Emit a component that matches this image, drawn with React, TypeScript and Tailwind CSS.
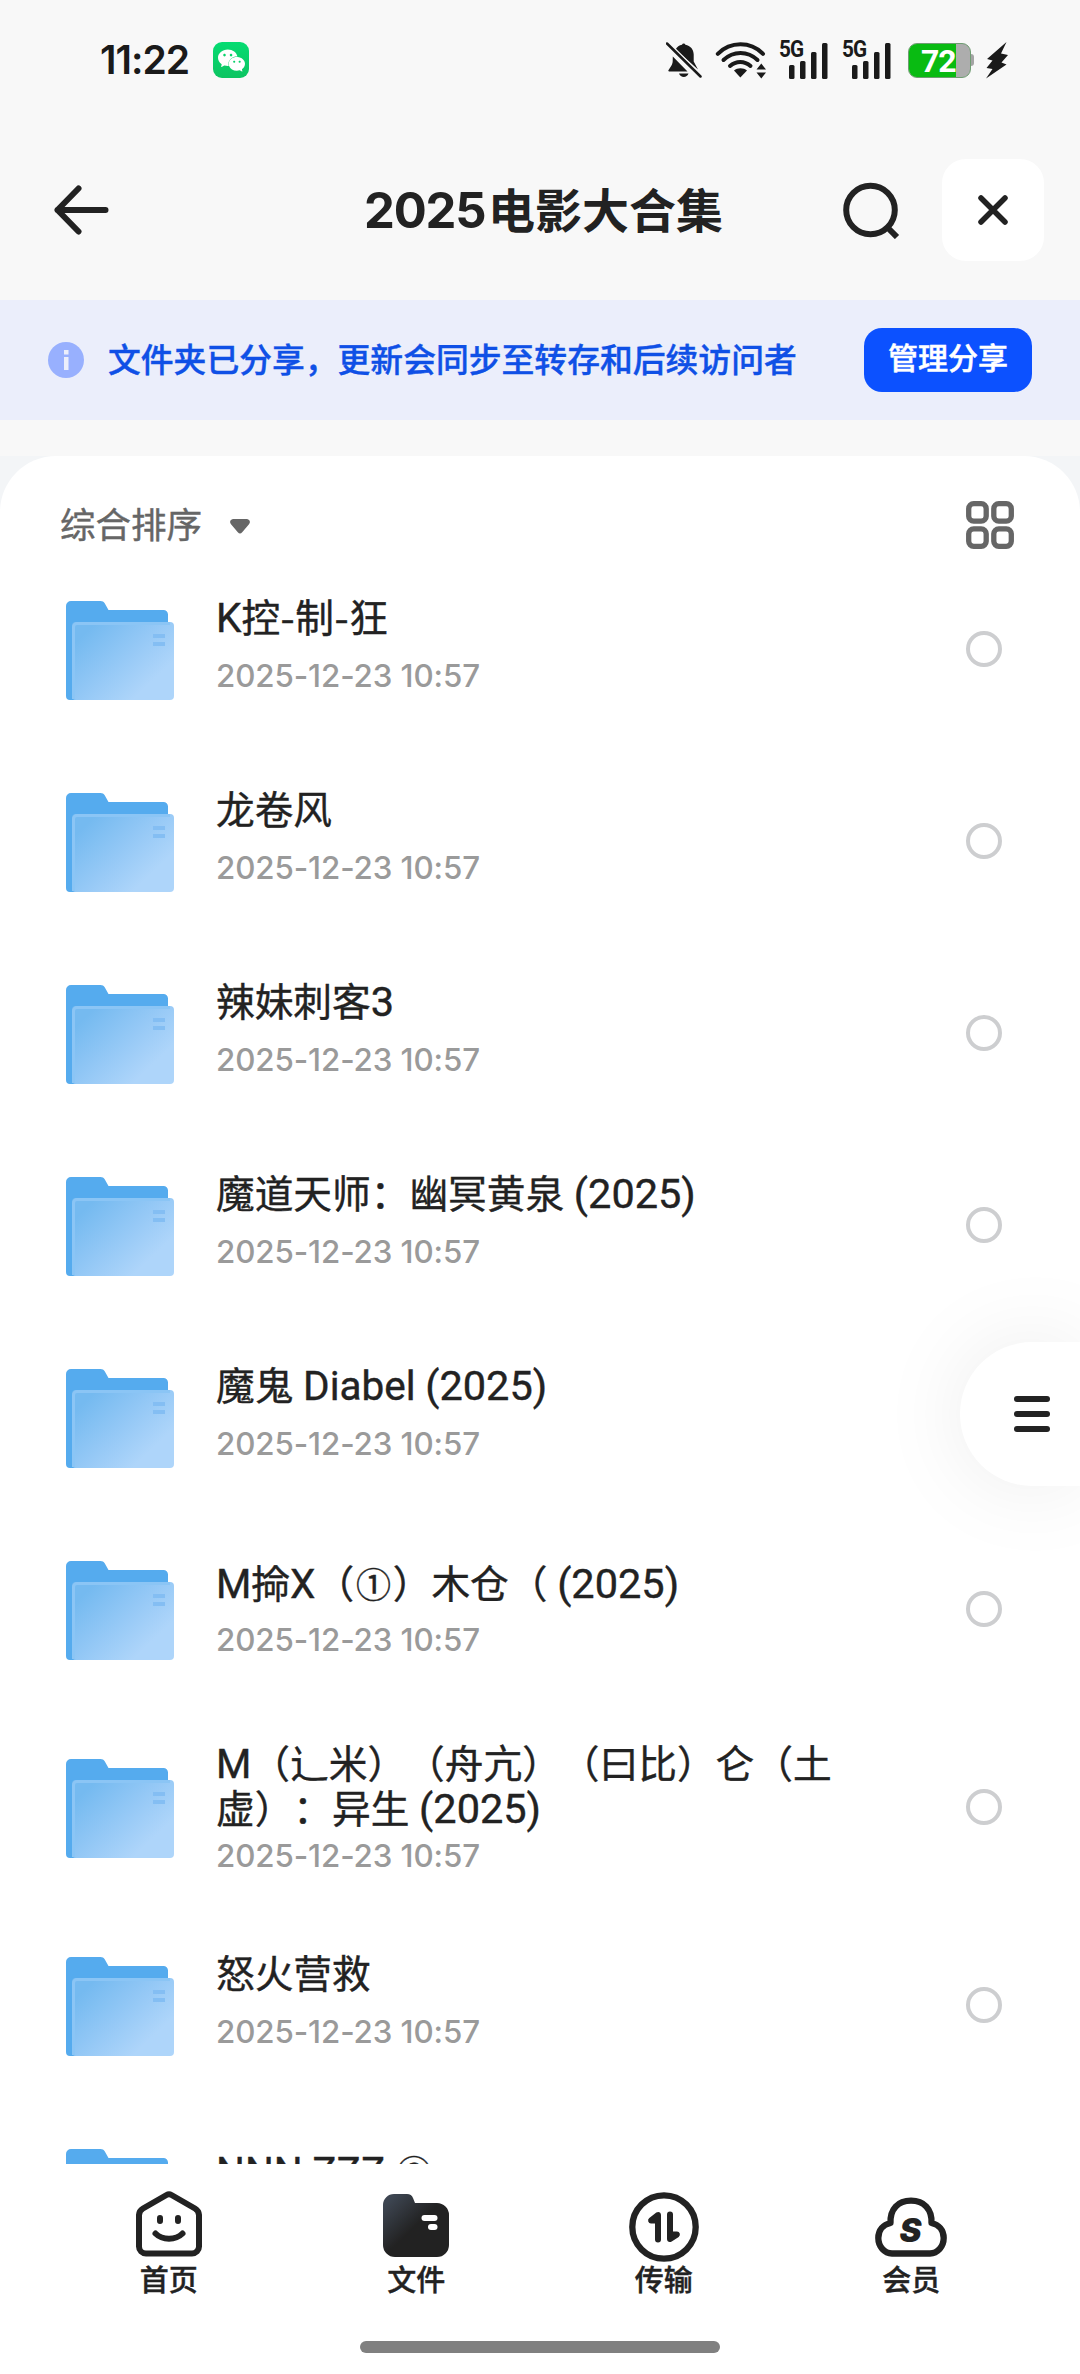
import React from "react";
import { SiWechat } from "react-icons/si";

type Folder = {
  id: number;
  lines: string[];
  date: string;
  rowClass: string;
  titleClass: string;
  dateClass: string;
};

const ROW = {
  rowClass: "h-[192px]",
  titleClass: "pt-[38px]",
  dateClass: "mt-[16px]",
};

// circled digits and two-line names make the row a bit taller
const ROW_TALL = {
  rowClass: "h-[198px]",
  titleClass: "pt-[44px]",
  dateClass: "mt-[14px]",
};

const ROW_DOUBLE = {
  rowClass: "h-[198px]",
  titleClass: "pt-[26px]",
  dateClass: "mt-[5px]",
};

const DATE = "2025-12-23 10:57";

const folders: Folder[] = [
  { id: 1, lines: ["K控-制-狂"], date: DATE, ...ROW },
  { id: 2, lines: ["龙卷风"], date: DATE, ...ROW },
  { id: 3, lines: ["辣妹刺客3"], date: DATE, ...ROW },
  { id: 4, lines: ["魔道天师：幽冥黄泉 (2025)"], date: DATE, ...ROW },
  { id: 5, lines: ["魔鬼 Diabel (2025)"], date: DATE, ...ROW },
  { id: 6, lines: ["M掵X（①）木仓（ (2025)"], date: DATE, ...ROW_TALL },
  {
    id: 7,
    lines: ["M（辶米）（舟亢）（曰比）仑（土", "虚）：异生 (2025)"],
    date: DATE,
    ...ROW_DOUBLE,
  },
  { id: 8, lines: ["怒火营救"], date: DATE, ...ROW },
  { id: 9, lines: ["NNN ZZZ ②"], date: DATE, ...ROW_TALL },
];

function BellOffIcon() {
  return (
    <svg width="36" height="36" viewBox="0 0 36 36" fill="#1a1a1a">
      <path d="M9.500 7.500C11 4.800 13.300 3.300 16 2.800a1.800 1.800 0 0 1 3.400 0c5 .9 8.300 4.800 8.300 9.700v7L32 27.500Z" />
      <path d="M6.800 14.500 21.500 29.500H3.200c-.8 0-1.200-.9-.6-1.500l2.700-4.200c.9-1.400 1.300-3 1.400-4.600z" />
      <path d="M13 31.500h9.500c-.8 2.300-2.600 3.500-4.700 3.500s-4-1.200-4.800-3.500z" />
      <path d="M1.200 1.500 34.500 34.500" stroke="#f8f8f8" strokeWidth="5" />
      <path d="M1 1.500 34.500 34.500" stroke="#1a1a1a" strokeWidth="2.500" strokeLinecap="round" />
    </svg>
  );
}

function WifiIcon() {
  return (
    <svg width="52" height="38" viewBox="0 0 52 38" fill="none">
      <g stroke="#1a1a1a" strokeWidth="4" strokeLinecap="round">
        <path d="M2.800 12.800C15.500.1 35.500.1 48 12.800" />
        <path d="M8.500 19c9.800-9.400 24.200-9.400 34 0" />
        <path d="M15 25c6-5.400 14.500-5.400 20.500 0" />
      </g>
      <path d="M19 29.500c3.500-3 9.500-3 13 0L25.300 36.500z" fill="#1a1a1a" />
      <path d="M41.500 28.500 46.300 22.500 51 28.500zM41.500 31.500H51L46.300 37.500z" fill="#1a1a1a" />
    </svg>
  );
}

function SignalIcon() {
  return (
    <div className="relative w-[49px] h-[38px]">
      <span className="absolute left-0 -top-[2px] text-[23px] leading-[22px] font-bold tracking-[-1px] origin-left scale-x-[0.9] font-['Roboto',sans-serif]">
        5G
      </span>
      <svg className="absolute right-0 bottom-0" width="39" height="37" viewBox="0 0 39 37" fill="#1a1a1a">
        <rect x="0" y="23" width="5.500" height="14" rx="1.500" />
        <rect x="11" y="19" width="5.500" height="18" rx="1.500" />
        <rect x="22" y="10" width="5.500" height="27" rx="1.500" />
        <rect x="33" y="1" width="5.500" height="36" rx="1.500" />
      </svg>
    </div>
  );
}

function BatteryIcon() {
  return (
    <div className="flex items-center">
      <div className="relative w-[63px] h-[35px] rounded-[9px] bg-[#adadad] border border-[#6f9d72]">
        <div className="h-full w-[47px] rounded-l-[8px] bg-[#09bb12]" />
        <span className="absolute left-[12px] -top-[3px] text-[32px] leading-[40px] font-bold tracking-[-1px] text-white font-['Roboto',sans-serif]">
          72
        </span>
      </div>
      <div className="w-[3px] h-[12px] rounded-r-[3px] bg-[#a4a4a4]" />
    </div>
  );
}

function StatusBar() {
  return (
    <div className="h-[120px] flex items-center pl-[100px] text-[#1a1a1a]">
      <span className="w-[113px] text-[39px] leading-[40px] font-semibold tracking-[-1px]">11:22</span>
      <div className="w-[36px] h-[36px] rounded-[9px] bg-gradient-to-b from-[#05dc72] to-[#0cc461] flex items-center justify-center">
        <SiWechat size={27} color="white" />
      </div>
      <div className="ml-auto mr-[72px] flex items-center">
        <BellOffIcon />
        <div className="ml-[13px]">
          <WifiIcon />
        </div>
        <div className="ml-[12px]">
          <SignalIcon />
        </div>
        <div className="ml-[14px]">
          <SignalIcon />
        </div>
        <div className="ml-[17px]">
          <BatteryIcon />
        </div>
        <svg className="ml-[12px]" width="22" height="38" viewBox="0 0 22 38" fill="#1a1a1a">
          <path d="M20.500 1 1 18l5.500 1.500L.5 27l6 1L0 37.500 20.500 23.500l-5-2L22 14l-7-1.500z" />
        </svg>
      </div>
    </div>
  );
}

function Header() {
  return (
    <div className="h-[180px] flex items-center pl-[53px] pr-[36px] text-[#222]">
      <svg width="56" height="50" viewBox="0 0 56 50" fill="none" stroke="#222" strokeWidth="6" strokeLinecap="round" strokeLinejoin="round">
        <path d="M52.500 25H4.500M25.500 3.500 4.500 25l21 21.500" />
      </svg>
      <h1 className="ml-[255px] pt-[2px] text-[47px] leading-[60px] font-bold whitespace-nowrap flex items-baseline">
        <span className="text-[49px] tracking-[-1.200px] w-[124px]">2025</span>
        <span>电影大合集</span>
      </h1>
      <svg className="ml-auto" width="58" height="58" viewBox="0 0 58 58" fill="none" stroke="#222" strokeWidth="6">
        <circle cx="28.500" cy="29" r="24.300" />
        <path d="M46 47 55 56" />
      </svg>
      <button className="ml-[42px] w-[102px] h-[102px] rounded-[24px] bg-white flex items-center justify-center">
        <svg width="32" height="32" viewBox="0 0 32 32" fill="none" stroke="#222" strokeWidth="5.500" strokeLinecap="round">
          <path d="M4 4l24 24M28 4 4 28" />
        </svg>
      </button>
    </div>
  );
}

function ShareBanner() {
  return (
    <div className="h-[120px] bg-[#ebeefb] flex items-center pl-[48px] pr-[48px]">
      <svg width="36" height="36" viewBox="0 0 36 36">
        <circle cx="18" cy="18" r="18" fill="#98b0fe" />
        <rect x="16" y="8" width="4.500" height="4.500" fill="#ebeefb" />
        <rect x="16" y="15" width="4.500" height="13" fill="#ebeefb" />
      </svg>
      <p className="ml-[24px] text-[32.800px] leading-[40px] font-medium text-[#0f50e6] whitespace-nowrap [-webkit-text-stroke:0.400px_#0f50e6]">
        文件夹已分享，更新会同步至转存和后续访问者
      </p>
      <button className="ml-auto w-[168px] h-[64px] rounded-[18px] bg-[#0c51ff] text-white text-[30px] leading-[60px] pb-[4px] font-medium [-webkit-text-stroke:0.500px_white]">
        管理分享
      </button>
    </div>
  );
}

function SortBar() {
  return (
    <div className="h-[99px] shrink-0 pt-[39px] pl-[60px] pr-[66px] flex items-center text-[#666]">
      <span className="pt-[1px] text-[35.500px] leading-[48px] [-webkit-text-stroke:0.400px_#666]">综合排序</span>
      <svg className="ml-[28px] mt-[2px]" width="20" height="15" viewBox="0 0 20 15" fill="#666">
        <path d="M3.500 0h13C19.500 0 21 3 19 5.200l-6.800 8a3 3 0 0 1-4.400 0l-6.800-8C-1 3 .5 0 3.500 0z" />
      </svg>
      <svg className="ml-auto" width="48" height="48" viewBox="0 0 48 48" fill="none" stroke="#666" strokeWidth="5.300">
        <rect x="2.700" y="2.700" width="17.500" height="17.500" rx="5" />
        <rect x="27.800" y="2.700" width="17.500" height="17.500" rx="5" />
        <rect x="2.700" y="27.800" width="17.500" height="17.500" rx="5" />
        <rect x="27.800" y="27.800" width="17.500" height="17.500" rx="5" />
      </svg>
    </div>
  );
}

function FolderIcon() {
  return (
    <svg className="mt-[46px] shrink-0" width="108" height="99" viewBox="0 0 108 99">
      <defs>
        <linearGradient id="folderFront" x1="0" y1="0.100" x2="1" y2="0.900">
          <stop offset="0.100" stopColor="#75baf0" />
          <stop offset="0.500" stopColor="#96c9f6" />
          <stop offset="0.800" stopColor="#aed5fa" />
        </linearGradient>
      </defs>
      <path d="M0 5a5 5 0 0 1 5-5h29.500c2 0 3.200.7 4.200 2.300L42.500 9H97.500a4.500 4.500 0 0 1 4.500 4.500V60L20 99H4a4 4 0 0 1-4-4z" fill="#55abee" />
      <rect x="6" y="21" width="102" height="78" rx="4" fill="url(#folderFront)" />
      <path d="M7.500 98V26a3.500 3.500 0 0 1 3.500-3.500h93" fill="none" stroke="#8bc5f5" strokeWidth="3" />
      <rect x="87" y="33" width="12" height="4" fill="#84bef3" />
      <rect x="87" y="41" width="12" height="4" fill="#84bef3" />
    </svg>
  );
}

function titlePartClass(part: string) {
  if (part === "-") return "text-[33px] font-['Inter',sans-serif]";
  if (/[①②]/.test(part)) return "inline-block w-[38.600px] text-center text-[35px]";
  if (/[A-Za-z]/.test(part)) return "text-[40.500px] font-['Roboto',sans-serif]";
  return "text-[41.500px] font-['Roboto',sans-serif]";
}

// latin runs are set in a slightly larger face than the Chinese ones
function FolderTitle({ text }: { text: string }) {
  const parts = text.split(/([A-Za-z]+|[0-9()]+|-|[①②])/);

  return (
    <p className="text-[38.700px] leading-[45px] h-[45px] whitespace-pre [word-spacing:1px] [-webkit-text-stroke:0.400px_#222]">
      {parts.map((part, i) =>
        i % 2 === 1 ? (
          <span key={i} className={`leading-[45px] ${titlePartClass(part)}`}>
            {part}
          </span>
        ) : (
          part
        )
      )}
    </p>
  );
}

function FolderRow({ folder }: { folder: Folder }) {
  return (
    <div className={`flex shrink-0 pl-[66px] pr-[78px] ${folder.rowClass}`}>
      <FolderIcon />
      <div className={`ml-[42px] flex-1 ${folder.titleClass}`}>
        <div className="text-[#222] font-['Noto_Sans_CJK_SC',sans-serif] [text-spacing-trim:space-all]">
          {folder.lines.map((line) => (
            <FolderTitle key={line} text={line} />
          ))}
        </div>
        <p className={`text-[31.300px] leading-[44px] tracking-[-0.100px] font-medium text-[#9a9a9a] whitespace-nowrap ${folder.dateClass}`}>
          {folder.date}
        </p>
      </div>
      <div className="mt-[76px] w-[36px] h-[36px] rounded-full border-4 border-[#cdced0]" />
    </div>
  );
}

function HomeIcon() {
  return (
    <svg width="72" height="72" viewBox="0 0 72 72" fill="none" stroke="#222" strokeWidth="6" strokeLinecap="round" strokeLinejoin="round">
      <path d="M33.500 5 10 18.500A8 8 0 0 0 6 25v31.500a7 7 0 0 0 7 7h46a7 7 0 0 0 7-7V25a8 8 0 0 0-4-6.500L38.500 5a5 5 0 0 0-5 0z" />
      <path d="M27 28v3M45 28v3" />
      <path d="M22.500 43.500c7 7 20 7 27 0" />
    </svg>
  );
}

function FilesIcon() {
  return (
    <svg width="72" height="72" viewBox="0 0 72 72">
      <defs>
        <linearGradient id="filesFill" x1="0.050" y1="0.150" x2="0.550" y2="0.650">
          <stop offset="0" stopColor="#3d4551" />
          <stop offset="0.800" stopColor="#222" />
        </linearGradient>
      </defs>
      <path d="M3 15A11 11 0 0 1 14 4h13c3 0 5 1.200 6 4l2 5h22a12 12 0 0 1 12 12v30a12 12 0 0 1-12 12H15A12 12 0 0 1 3 55z" fill="url(#filesFill)" />
      <rect x="41.500" y="25" width="16" height="6" rx="3" fill="white" />
      <rect x="48" y="34" width="9.500" height="6" rx="3" fill="white" />
    </svg>
  );
}

function TransferIcon() {
  return (
    <svg width="72" height="72" viewBox="0 0 72 72" fill="none">
      <circle cx="36" cy="37" r="31.700" stroke="#222" strokeWidth="6.300" />
      <path d="M33 25v24.500a3 3 0 0 1-6 0V33.500h-4a3 3 0 0 1-1.700-5.400l7-5.500c2-1.400 4.700-.6 4.700 2.400z" fill="#222" />
      <path d="M39 49V24.500a3 3 0 0 1 6 0V41.500h4a3 3 0 0 1 1.700 5.400l-7 4.500c-2 1.400-4.700.6-4.700-2.400z" fill="#222" />
    </svg>
  );
}

function MemberIcon() {
  return (
    <svg width="72" height="72" viewBox="0 0 72 72" fill="none">
      <path
        d="M17 63.500A14 15.500 0 0 1 3.300 48C3.300 40 8.500 34.500 15.500 33C15 19 23 10.700 36 10.700S57 19 56.500 33C63.500 34.500 68.700 40 68.700 48A14 15.500 0 0 1 55 63.500z"
        stroke="#222"
        strokeWidth="6.300"
        strokeLinejoin="round"
      />
      <text x="35.500" y="52" textAnchor="middle" className="font-['Inter',sans-serif] font-black italic text-[33px]" fill="#222">
        S
      </text>
    </svg>
  );
}

const tabs = [
  { label: "首页", icon: <HomeIcon /> },
  { label: "文件", icon: <FilesIcon /> },
  { label: "传输", icon: <TransferIcon /> },
  { label: "会员", icon: <MemberIcon /> },
];

function BottomNav() {
  return (
    <div className="h-[210px] bg-white flex flex-col items-center">
      <div className="w-full pt-[26px] pl-[45px] pr-[45px] grid grid-cols-4">
        {tabs.map((tab) => (
          <div key={tab.label} className="flex flex-col items-center">
            {tab.icon}
            <span className="pt-[1px] text-[29px] leading-[35px] font-medium text-[#222] [-webkit-text-stroke:0.400px_#222]">
              {tab.label}
            </span>
          </div>
        ))}
      </div>
      <div className="mt-[43px] w-[360px] h-[12px] rounded-full bg-[#808080]" />
    </div>
  );
}

export default function App() {
  return (
    <div className="relative w-[1080px] h-[2374px] overflow-hidden flex flex-col bg-[#f8f8f8] font-['Inter','Noto_Sans_CJK_SC',sans-serif]">
      <StatusBar />
      <Header />
      <ShareBanner />
      <div className="h-[36px] shrink-0" />
      <div className="h-[1708px] shrink-0 bg-[#f3f5f7]">
        <div className="h-full rounded-t-[56px] bg-white flex flex-col overflow-hidden">
          <SortBar />
          {folders.map((folder) => (
            <FolderRow key={folder.id} folder={folder} />
          ))}
        </div>
      </div>
      <BottomNav />

      <button className="absolute right-0 top-[1342px] w-[120px] h-[144px] rounded-l-[72px] bg-white shadow-[0_0_90px_rgba(0,0,0,0.080)] pl-[54px] flex flex-col justify-center gap-[9px]">
        <span className="w-[36px] h-[6px] rounded-full bg-[#222]" />
        <span className="w-[36px] h-[6px] rounded-full bg-[#222]" />
        <span className="w-[36px] h-[6px] rounded-full bg-[#222]" />
      </button>
    </div>
  );
}
